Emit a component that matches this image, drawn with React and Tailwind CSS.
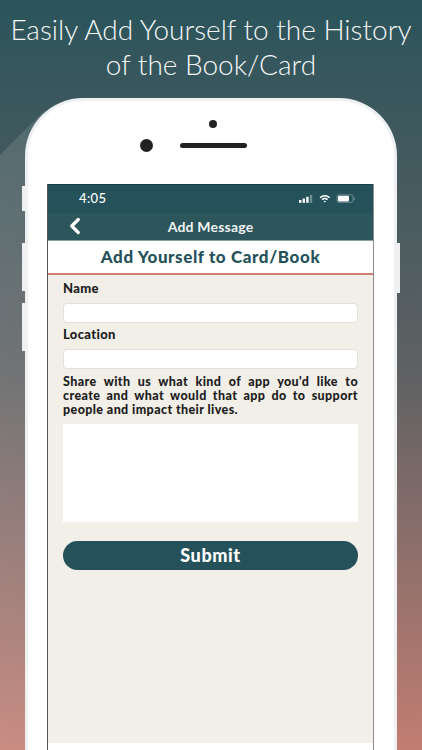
import React from "react";
import { ChevronLeft } from "lucide-react";

const BODY_FONT = "font-['Lato','Liberation_Sans',sans-serif]";

function StatusIcons() {
  return (
    <svg width="58" height="10" viewBox="0 0 58 10" fill="none">
      {/* signal */}
      <rect x="0" y="6" width="2.4" height="2.8" fill="#fff" />
      <rect x="3.6" y="4.6" width="2.4" height="4.2" fill="#fff" />
      <rect x="7.2" y="2.8" width="2.4" height="6" fill="#fff" />
      <rect x="10.8" y="1" width="2.4" height="7.8" fill="#fff" opacity="0.35" />
      {/* wifi */}
      <path d="M21 3.6a8 8 0 0 1 9.6 0" stroke="#fff" strokeWidth="1.4" />
      <path d="M23 5.6a4.6 4.6 0 0 1 5.6 0" stroke="#fff" strokeWidth="1.4" />
      <path d="M24.6 7.2l1.2 1.4 1.2-1.4a2 2 0 0 0-2.4 0z" fill="#fff" />
      {/* battery */}
      <rect x="38" y="0.8" width="16" height="7.6" rx="2" stroke="#fff" strokeOpacity="0.4" strokeWidth="0.8" />
      <rect x="39" y="1.8" width="11" height="5.6" rx="1" fill="#fff" />
      <rect x="54.8" y="3.4" width="1" height="2.6" rx="0.5" fill="#fff" opacity="0.4" />
    </svg>
  );
}

function Field({ label }) {
  return (
    <div className="flex flex-col gap-[7px]">
      <label className="text-[13px] leading-[15px] font-black text-[#1d1d1d] tracking-[0.35px]">{label}</label>
      <div className="h-[20px] bg-white rounded-[4px] border border-[#e2e0dc]" />
    </div>
  );
}

export default function App() {
  return (
    <div className="relative w-[422px] h-[750px] overflow-hidden bg-gradient-to-b from-[#2a545b] via-[#5f6163] via-50% to-[#c27d72]">
      {/* lighter diagonal band behind the phone */}
      <div className="absolute inset-0 bg-gradient-to-r from-white/12 to-white/4 [clip-path:polygon(0_155px,45px_110px,170px_750px,0_750px)]" />

      <h1 className="relative pt-[12px] text-center text-[28px] leading-[35px] font-light whitespace-nowrap text-[#f4f6f6] font-['Lato',sans-serif]">
        Easily Add Yourself to the History
        <br />
        of the Book/Card
      </h1>

      {/* phone */}
      <div className="relative mt-[16px] mx-[25px] h-[700px] bg-white rounded-t-[58px] border-[3px] border-b-0 border-[#eef0f2] pl-[19px] pr-[20px] pt-[83px]">
        {/* side buttons */}
        <div className="absolute left-[-6px] top-[85px] w-[5px] h-[25px] bg-[#eef0f2]" />
        <div className="absolute left-[-6px] top-[142px] w-[5px] h-[48px] bg-[#eef0f2]" />
        <div className="absolute left-[-6px] top-[202px] w-[5px] h-[48px] bg-[#eef0f2]" />
        <div className="absolute right-[-6px] top-[142px] w-[5px] h-[50px] bg-[#eef0f2]" />

        {/* camera and speaker */}
        <div className="absolute left-[181px] top-[19px] w-[8px] h-[8px] rounded-full bg-[#222]" />
        <div className="absolute left-[112px] top-[38px] w-[13px] h-[13px] rounded-full bg-[#222]" />
        <div className="absolute left-[152px] top-[42px] w-[67px] h-[5px] rounded-full bg-[#222]" />

        {/* screen */}
        <div className={`h-[620px] flex flex-col border-l border-l-[#555] border-r border-r-[#8c8c8c] ${BODY_FONT}`}>
          <div className="h-[29px] shrink-0 flex items-center justify-between pl-[31px] pr-[16px] bg-[#25525a] border-t border-[#1c3f45]">
            <span className="text-[13px] font-medium text-white tracking-[0.4px]">4:05</span>
            <StatusIcons />
          </div>
          <div className="relative h-[28px] shrink-0 flex items-center justify-center bg-[#2c565c] border-b border-[#8aa0a3]">
            <ChevronLeft className="absolute left-[14px] top-[0px] text-white" size={26} strokeWidth={3} />
            <span className="text-[14px] font-bold text-white/95 tracking-[0.2px]">Add Message</span>
          </div>
          <div className="h-[34px] shrink-0 flex items-center justify-center bg-white border-b-2 border-[#cf8074]">
            <span className="text-[17px] font-black text-[#25525a] tracking-[0.6px]">Add Yourself to Card/Book</span>
          </div>
          <div className="h-[468px] shrink-0 flex flex-col bg-[#f2efe8] px-[15px] pt-[6px]">
            <div className="flex flex-col gap-[4px]">
              <Field label="Name" />
              <Field label="Location" />
            </div>
            <p className="mt-[6px] text-[12.5px] leading-[14px] font-black text-[#1d1d1d] text-justify tracking-[0.4px]">
              Share with us what kind of app you'd like to create and what would that app do to support people and impact their lives.
            </p>
            <div className="mt-[7px] h-[98px] bg-white" />
            <button className="mt-[19px] h-[29px] rounded-full bg-[#25525a] text-[18px] font-black text-white tracking-[0.6px]">
              Submit
            </button>
          </div>
          <div className="flex-1 bg-white" />
        </div>
      </div>
    </div>
  );
}
